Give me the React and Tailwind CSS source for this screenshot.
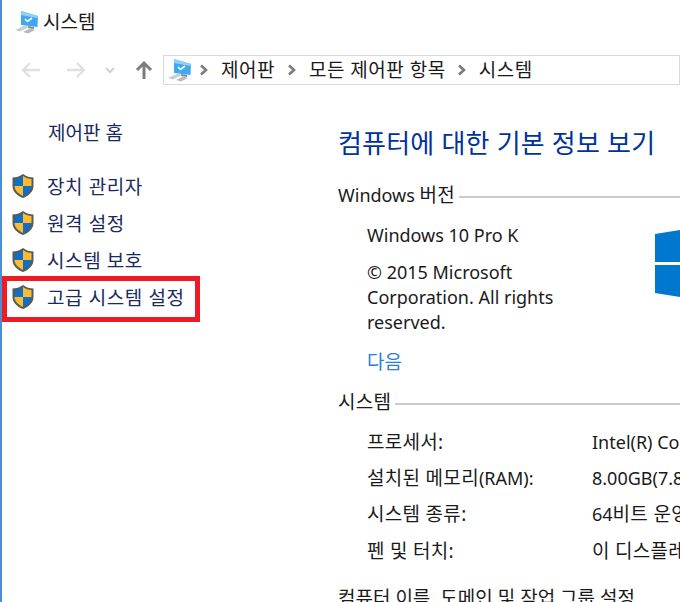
const font = { fontFamily: '"Noto Sans", "Noto Sans CJK KR", sans-serif' };

function PcIcon() {
  return (
    <svg width="26" height="24" viewBox="0 0 26 24" className="shrink-0">
      <path d="M7 1 L24 6 L23.5 17 L7 15 Z" fill="#3fa9f0" />
      <path d="M7 1 L24 6 L23.5 8 L7 5 Z" fill="#8fd0f8" />
      <path d="M11 9 L13.5 11.5 L18 8" stroke="#fff" strokeWidth="1.6" fill="none" />
      <path d="M14 16 L20 17 L20 19 L14 18 Z" fill="#7a8a96" />
      <path d="M1 20 L11 15.5 L15 17 L6 21.5 Z" fill="#c9ced2" />
      <path d="M9 22 L16 18.5 L21 20 L14 23.5 Z" fill="#b4babf" />
    </svg>
  );
}

function Shield() {
  return (
    <svg width="24" height="26" viewBox="0 0 24 26" className="shrink-0">
      <path d="M12 1 C9 3.5 5 4.5 1.5 4.5 L1.5 13 C1.5 19 7 23 12 25 C17 23 22.5 19 22.5 13 L22.5 4.5 C19 4.5 15 3.5 12 1 Z" fill="#5a5a52" />
      <path d="M12 3 C9.5 5 6 6 3.5 6 L3.5 13 L12 13 Z" fill="#0f6fc6" />
      <path d="M12 3 C14.5 5 18 6 20.5 6 L20.5 13 L12 13 Z" fill="#fdbb30" />
      <path d="M3.5 13 L12 13 L12 23 C8 21 3.7 18 3.5 13 Z" fill="#fdbb30" />
      <path d="M20.5 13 L12 13 L12 23 C16 21 20.3 18 20.5 13 Z" fill="#0f6fc6" />
    </svg>
  );
}

function Crumb() {
  return (
    <svg width="10" height="12" viewBox="0 0 10 12" className="shrink-0">
      <path d="M2 1.5 L7 6 L2 10.5" stroke="#7c7c7c" strokeWidth="2.6" fill="none" />
    </svg>
  );
}

function NavArrow({ flip, color }) {
  return (
    <svg width="22" height="20" viewBox="0 0 22 20" className={flip ? "rotate-180 shrink-0" : "shrink-0"}>
      <path d="M20 10 L3 10 M10 3 L3 10 L10 17" stroke={color} strokeWidth="2.4" fill="none" />
    </svg>
  );
}

function SideItem({ label }) {
  return (
    <div className="flex items-center h-[37px] pl-[9px] gap-[12px]">
      <span className="mb-[2px]"><Shield /></span>
      <span className="mt-[2px] text-[19px] tracking-[0.6px] text-[#1a2a5e]">{label}</span>
    </div>
  );
}

function Section({ title }) {
  return (
    <div className="flex items-center gap-[4px] h-[25px]">
      <span className="text-[18px] text-[#1a1a1a] whitespace-nowrap">{title}</span>
      <div className="h-[2px] flex-1 bg-[#cccccc] mt-[2px]" />
    </div>
  );
}

function Ko({ children }) {
  return <span className="text-[19px] tracking-[0.3px]">{children}</span>;
}

function SpecRow({ label, value }) {
  return (
    <div className="flex h-[36.3px] items-center pl-[29px] text-[18px] text-[#1a1a1a] whitespace-nowrap">
      <span className="w-[225px] shrink-0">{label}</span>
      <span>{value}</span>
    </div>
  );
}

export default function App() {
  return (
    <div style={font} className="w-[680px] h-[602px] overflow-hidden bg-white border-l-2 border-[#4a90d0]">
      <div className="flex items-center h-[44px] pl-[12px] gap-[3px]">
        <PcIcon />
        <span className="text-[19px] text-[#1a1a1a]">시스템</span>
      </div>

      <div className="flex items-center h-[30px] mt-[11px]">
        <div className="flex items-center w-[161px] pl-[18px] shrink-0">
          <NavArrow color="#e0e0e0" />
          <span className="w-[23px]" />
          <NavArrow flip color="#e0e0e0" />
          <svg width="10" height="8" viewBox="0 0 10 8" className="ml-[18px] mr-[20px] shrink-0">
            <path d="M1 2 L5 6 L9 2" stroke="#d0d0d0" strokeWidth="2" fill="none" />
          </svg>
          <svg width="18" height="20" viewBox="0 0 18 20" className="shrink-0">
            <path d="M9 19 L9 3 M2 10 L9 3 L16 10" stroke="#7c7c7c" strokeWidth="3" fill="none" />
          </svg>
        </div>
        <div className="flex-1 h-[30px] border border-[#d9d9d9] flex items-center pl-[3px] text-[19px] tracking-[0.5px] text-[#1a1a1a] whitespace-nowrap">
          <PcIcon />
          <span className="ml-[6px]"><Crumb /></span>
          <span className="ml-[12px]">제어판</span>
          <span className="ml-[12px]"><Crumb /></span>
          <span className="ml-[12px]">모든 제어판 항목</span>
          <span className="ml-[11px]"><Crumb /></span>
          <span className="ml-[12px]">시스템</span>
        </div>
      </div>

      <div className="flex">
        <div className="w-[336px] shrink-0">
          <div className="pl-[46px] pt-[34px] h-[83px] text-[19px] text-[#1a2a5e]">제어판 홈</div>
          <SideItem label="장치 관리자" />
          <SideItem label="원격 설정" />
          <SideItem label="시스템 보호" />
          <div className="relative">
            <SideItem label="고급 시스템 설정" />
            <div className="absolute left-0 top-[-3px] w-[198px] h-[46px] border-[5px] border-[#ed1c24]" />
          </div>
        </div>

        <div className="flex-1 min-w-0">
          <h1 className="text-[26px] tracking-[0.2px] text-[#003399] mt-[40px] h-[36px] leading-[36px] whitespace-nowrap">컴퓨터에 대한 기본 정보 보기</h1>
          <div className="mt-[22px]"><Section title={<>Windows <Ko>버전</Ko></>} /></div>
          <div className="flex mt-[15px]">
            <div className="w-[317px] shrink-0 pl-[29px] text-[18px] leading-[25px] text-[#1a1a1a]">
              <p>Windows 10 Pro K</p>
              <p className="mt-[12px] w-[192px]">© 2015 Microsoft Corporation. All rights reserved.</p>
              <p className="mt-[15px] text-[19px] text-[#2a7fd8]">다음</p>
            </div>
            <svg width="25" height="68" viewBox="0 0 25 68" className="shrink-0 mt-[7px]">
              <path d="M0 4 L25 0 L25 32 L0 32 Z" fill="#0078cf" />
              <path d="M0 35 L25 35 L25 67 L0 63 Z" fill="#0078cf" />
            </svg>
          </div>
          <div className="mt-[15px]"><Section title={<Ko>시스템</Ko>} /></div>
          <div className="mt-[9px]">
            <SpecRow label={<Ko>프로세서:</Ko>} value="Intel(R) Core(TM)" />
            <SpecRow label={<><Ko>설치된 메모리</Ko>(RAM):</>} value="8.00GB(7.89GB)" />
            <SpecRow label={<Ko>시스템 종류:</Ko>} value={<>64<Ko>비트 운영 체제</Ko></>} />
            <SpecRow label={<Ko>펜 및 터치:</Ko>} value={<Ko>이 디스플레이</Ko>} />
          </div>
          <div className="mt-[15px] text-[19px] text-[#1a1a1a] whitespace-nowrap">컴퓨터 이름, 도메인 및 작업 그룹 설정</div>
        </div>
      </div>
    </div>
  );
}
